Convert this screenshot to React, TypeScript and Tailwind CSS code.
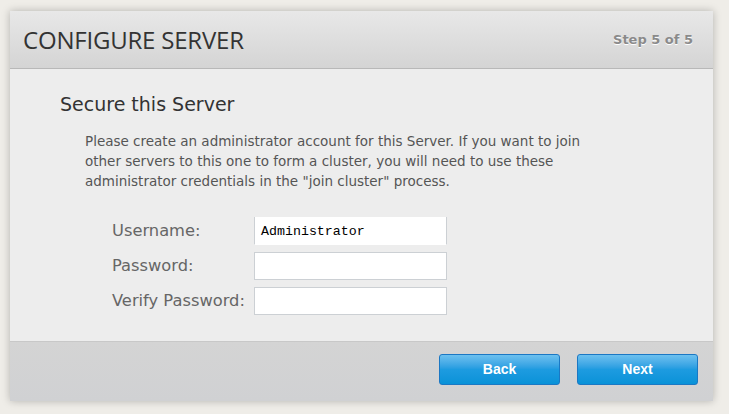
export default function App() {
  return (
    <div className="h-[414px] w-[729px] bg-[#efede8] pt-[11px] pl-[10px]">
      <div className="w-[703px] shadow-[0_0_8px_rgba(0,0,0,0.25)]">
        {/* Header */}
        <div className="flex h-[58px] items-center justify-between border-b border-[#b8b8b8] bg-gradient-to-b from-[#e8e8e8] to-[#d4d4d4] pl-[13px] pr-[20px]">
          <h1 className="text-[24px] text-[#333] [font-family:'Open_Sans',sans-serif] tracking-[-0.2px]">CONFIGURE SERVER</h1>
          <span className="text-[13px] font-bold text-[#8a8a8a] [font-family:'DejaVu_Sans',sans-serif] [text-shadow:0_1px_0_#fff]">
            Step 5 of 5
          </span>
        </div>

        {/* Body */}
        <div className="h-[272px] bg-[#ededed] pl-[50px] pt-[22px] [font-family:'DejaVu_Sans',sans-serif]">
          <h2 className="text-[19px] leading-[26px] text-[#333]">Secure this Server</h2>
          <p className="mt-[14px] ml-[25px] w-[520px] text-[13.5px] leading-[20px] text-[#555]">
            Please create an administrator account for this Server. If you want to join other servers to this one to form a cluster, you will need to use these administrator credentials in the "join cluster" process.
          </p>
          <div className="mt-[26px] ml-[52px] flex flex-col gap-[7px]">
            <Row label="Username:" value="Administrator" first />
            <Row label="Password:" />
            <Row label="Verify Password:" />
          </div>
        </div>

        {/* Footer */}
        <div className="flex h-[60px] items-start justify-end gap-[17px] border-t border-[#c8c8c8] bg-gradient-to-b from-[#d4d4d4] to-[#d0d1d3] pt-[12px] pr-[15px]">
          <Btn>Back</Btn>
          <Btn>Next</Btn>
        </div>
      </div>
    </div>
  );
}

function Row({ label, value, first }: { label: string; value?: string; first?: boolean }) {
  return (
    <div className="flex items-center">
      <label className="w-[142px] text-[16.3px] text-[#666]">{label}</label>
      <div
        className={`flex h-[28px] w-[193px] items-center bg-white px-[6px] pt-[2px] ${
          first ? 'border-x border-b border-[#ccd0d4] border-b-white' : 'border border-[#ccd0d4]'
        }`}
      >
        <span className="text-[13.3px] text-[#000] [font-family:'Liberation_Mono',monospace]">{value}</span>
      </div>
    </div>
  );
}

function Btn({ children }: { children: string }) {
  return (
    <button className="h-[31px] w-[121px] rounded-[3px] border border-[#1b78c4] bg-gradient-to-b from-[#6cc0ef] via-[#1d9be0] to-[#0892d8] text-[14px] font-bold text-white [font-family:'Liberation_Sans',sans-serif]">
      {children}
    </button>
  );
}
